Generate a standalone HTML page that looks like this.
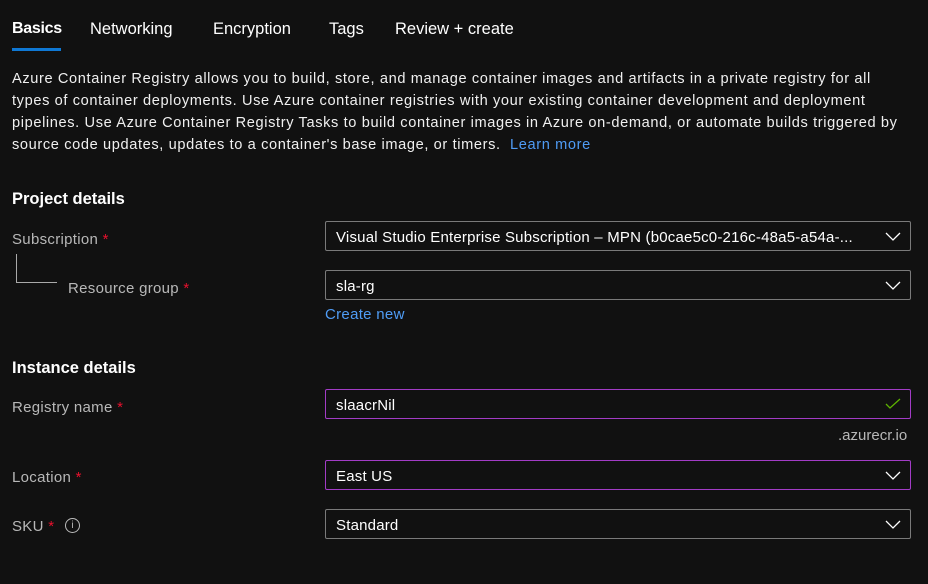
<!DOCTYPE html>
<html><head><style>
body{margin:0;width:928px;height:584px;background:#111;font-family:"Liberation Sans",sans-serif;color:#fff;position:relative;overflow:hidden}
.a{position:absolute;white-space:nowrap}
.tab{font-size:16.5px;top:20px}
.p{font-size:14.6px;left:12px;color:#f0f0f0;letter-spacing:0.62px;top:0}
.h{font-size:16.5px;font-weight:bold;left:12px}
.l{font-size:15px;color:#b8b8b8;letter-spacing:0.3px}
.s{color:#e8112d}
.box{position:absolute;left:325px;width:584px;height:28px;border:1px solid #7a7a7a;border-radius:2px;box-sizing:content-box}
.box span{position:absolute;left:10px;top:7px;font-size:15px;color:#fff;white-space:nowrap;letter-spacing:0.2px}
.box svg{position:absolute;right:9px;top:10px}
.pur{border-color:#a23cc6}
</style></head><body>
<div class="a tab" style="left:12px;font-weight:bold;font-size:16px;letter-spacing:-0.3px">Basics</div>
<div class="a" style="left:12px;top:48px;width:49px;height:3px;background:#0f78d4"></div>
<div class="a tab" style="left:90px">Networking</div>
<div class="a tab" style="left:213px">Encryption</div>
<div class="a tab" style="left:329px">Tags</div>
<div class="a tab" style="left:395px">Review + create</div>
<div class="a p" style="top:71px">Azure Container Registry allows you to build, store, and manage container images and artifacts in a private registry for all</div>
<div class="a p" style="top:93px">types of container deployments. Use Azure container registries with your existing container development and deployment</div>
<div class="a p" style="top:115px">pipelines. Use Azure Container Registry Tasks to build container images in Azure on-demand, or automate builds triggered by</div>
<div class="a p" style="top:137px">source code updates, updates to a container's base image, or timers. &nbsp;<span style="color:#4f9cf5">Learn more</span></div>
<div class="a h" style="top:190px">Project details</div>
<div class="a l" style="left:12px;top:231px">Subscription <span class="s">*</span></div>
<div class="a" style="left:16px;top:254px;width:40px;height:28px;border-left:1px solid #aaa;border-bottom:1px solid #aaa"></div>
<div class="a l" style="left:68px;top:280px">Resource group <span class="s">*</span></div>
<div class="box" style="top:221px"><span>Visual Studio Enterprise Subscription – MPN (b0cae5c0-216c-48a5-a54a-...</span><svg width="16" height="10"><path d="M1 1l7 7 7-7" stroke="#fff" fill="none" stroke-width="1.3"/></svg></div>
<div class="box" style="top:270px"><span>sla-rg</span><svg width="16" height="10"><path d="M1 1l7 7 7-7" stroke="#fff" fill="none" stroke-width="1.3"/></svg></div>
<div class="a" style="left:325px;top:306px;font-size:15px;color:#4f9cf5;letter-spacing:0.3px">Create new</div>
<div class="a h" style="top:359px">Instance details</div>
<div class="a l" style="left:12px;top:399px">Registry name <span class="s">*</span></div>
<div class="box pur" style="top:389px"><span>slaacrNil</span><svg width="16" height="12" style="top:8px"><path d="M1 6l4 4 10-9" stroke="#5db300" fill="none" stroke-width="1.3"/></svg></div>
<div class="a" style="left:838px;top:427px;font-size:15px;color:#b8b8b8">.azurecr.io</div>
<div class="a l" style="left:12px;top:469px">Location <span class="s">*</span></div>
<div class="box pur" style="top:460px"><span>East US</span><svg width="16" height="10"><path d="M1 1l7 7 7-7" stroke="#fff" fill="none" stroke-width="1.3"/></svg></div>
<div class="a l" style="left:12px;top:518px">SKU <span class="s">*</span></div>
<div class="a" style="left:65px;top:518px;width:13px;height:13px;border:1px solid #bbb;border-radius:50%;font-size:10px;text-align:center;line-height:13px;color:#bbb">i</div>
<div class="box" style="top:509px"><span>Standard</span><svg width="16" height="10"><path d="M1 1l7 7 7-7" stroke="#fff" fill="none" stroke-width="1.3"/></svg></div>
</body></html>
